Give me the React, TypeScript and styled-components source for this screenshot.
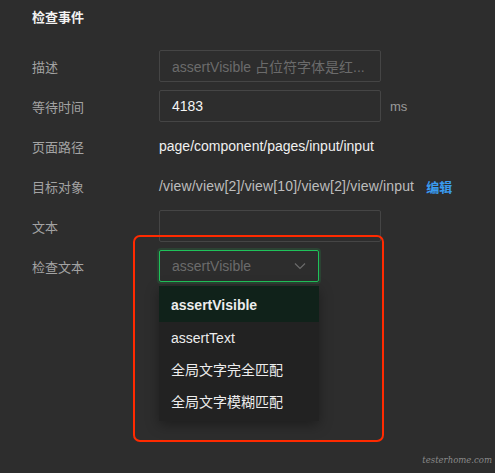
import React from "react";
import styled, { createGlobalStyle } from "styled-components";

const Global = createGlobalStyle`
  html, body { margin: 0; padding: 0; background: #2d2d2d; }
  body {
    font-family: "Liberation Sans", "Noto Sans CJK SC", Arial, sans-serif;
    -webkit-font-smoothing: antialiased;
  }
`;

const Page = styled.div`
  position: relative;
  width: 495px;
  height: 473px;
  background: #2d2d2d;
  box-sizing: border-box;
  padding: 9px 0 0 32px;
  overflow: hidden;
`;

const Title = styled.div`
  color: #f2f2f2;
  font-size: 13px;
  font-weight: 600;
  line-height: 17px;
  margin-bottom: 24px;
`;

const Form = styled.div`
  display: flex;
  flex-direction: column;
  gap: 8px;
`;

const Row = styled.div`
  display: flex;
  align-items: center;
  min-height: 32px;
`;

const Label = styled.div`
  width: 127px;
  flex: none;
  color: #a3a3a3;
  font-size: 13px;
`;

const Input = styled.div<{ $width?: number; $placeholder?: boolean }>`
  width: ${(p) => p.$width ?? 222}px;
  height: 32px;
  box-sizing: border-box;
  border: 1px solid #454545;
  border-radius: 2px;
  padding: 0 12px;
  display: flex;
  align-items: center;
  font-size: 14px;
  color: ${(p) => (p.$placeholder ? "#6b6b6b" : "#f5f5f5")};
  white-space: nowrap;
  overflow: hidden;
`;

const Unit = styled.span`
  margin-left: 9px;
  color: #9a9a9a;
  font-size: 13px;
`;

const Value = styled.div`
  color: #f0f0f0;
  font-size: 14px;
  white-space: nowrap;
`;

const PathValue = styled(Value)`
  color: #bdbdbd;
  letter-spacing: 0.17px;
`;

const Link = styled.span`
  margin-left: 12px;
  color: #3a9bf0;
  font-size: 13px;
  font-weight: 600;
`;

const SelectWrap = styled.div`
  position: relative;
`;

const Select = styled.div`
  width: 160px;
  height: 32px;
  box-sizing: border-box;
  border: 1px solid #1fc25a;
  border-radius: 2px;
  box-shadow: 0 0 0 2px rgba(31, 194, 90, 0.15);
  padding: 0 12px;
  display: flex;
  align-items: center;
  justify-content: space-between;
  color: #6b6b6b;
  font-size: 14px;
`;

const Menu = styled.div`
  position: absolute;
  left: 0;
  top: 36px;
  width: 160px;
  background: #222222;
  box-shadow: 0 4px 12px rgba(0, 0, 0, 0.35);
  padding: 0 0 3px;
`;

const Item = styled.div<{ $active?: boolean }>`
  height: 32px;
  line-height: 32px;
  padding: 0 12px;
  font-size: 14px;
  color: #ededed;
  font-weight: ${(p) => (p.$active ? 700 : 400)};
  background: ${(p) => (p.$active ? "#10221a" : "transparent")};
  &:first-child {
    height: 36px;
    line-height: 38px;
  }
`;

const Highlight = styled.div`
  position: absolute;
  left: 133px;
  top: 235px;
  width: 251px;
  height: 207px;
  box-sizing: border-box;
  border: 2.5px solid #ff2a00;
  border-radius: 7px;
  pointer-events: none;
`;

const Watermark = styled.div`
  position: absolute;
  right: 3px;
  bottom: 8px;
  color: #8a8a8a;
  font-family: "DejaVu Serif", serif;
  font-style: italic;
  font-size: 8.5px;
`;

const Chevron = () => (
  <svg width="12" height="8" viewBox="0 0 12 8" fill="none">
    <path d="M1 1.5 L6 6.5 L11 1.5" stroke="#6b6b6b" strokeWidth="1.2" />
  </svg>
);

export default function App() {
  return (
    <>
      <Global />
      <Page>
        <Title>检查事件</Title>
        <Form>
          <Row>
            <Label>描述</Label>
            <Input $placeholder>assertVisible 占位符字体是红...</Input>
          </Row>
          <Row>
            <Label>等待时间</Label>
            <Input>4183</Input>
            <Unit>ms</Unit>
          </Row>
          <Row>
            <Label>页面路径</Label>
            <Value>page/component/pages/input/input</Value>
          </Row>
          <Row>
            <Label>目标对象</Label>
            <PathValue>/view/view[2]/view[10]/view[2]/view/input</PathValue>
            <Link>编辑</Link>
          </Row>
          <Row>
            <Label>文本</Label>
            <Input $placeholder />
          </Row>
          <Row>
            <Label>检查文本</Label>
            <SelectWrap>
              <Select>
                <span>assertVisible</span>
                <Chevron />
              </Select>
              <Menu>
                <Item $active>assertVisible</Item>
                <Item>assertText</Item>
                <Item>全局文字完全匹配</Item>
                <Item>全局文字模糊匹配</Item>
              </Menu>
            </SelectWrap>
          </Row>
        </Form>
        <Highlight />
        <Watermark>testerhome.com</Watermark>
      </Page>
    </>
  );
}
